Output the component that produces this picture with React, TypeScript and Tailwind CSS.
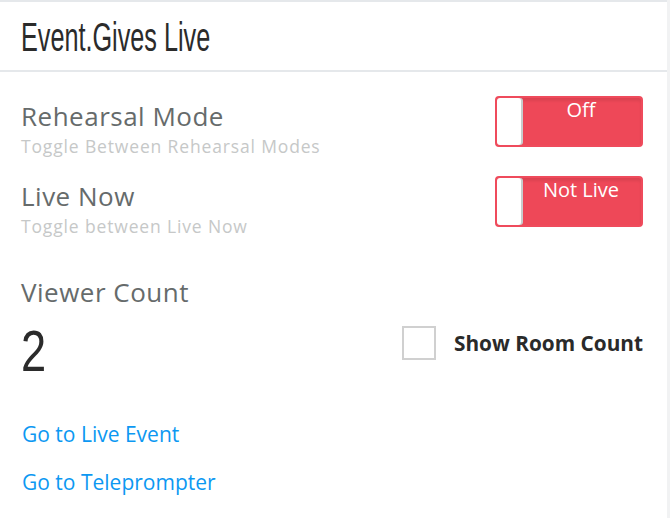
import { useState } from "react";

function Toggle({ label }: { label: string }) {
  return (
    <button className="relative flex h-[51px] w-[148px] shrink-0 rounded-[4px] border-2 border-[#ef4b5c] bg-[#ee4858] shadow-[inset_0_3px_3px_rgba(0,0,0,0.08)]">
      <span className="h-full w-[24px] rounded-[3px] bg-white shadow-[2px_0_0_#c8cccc]" />
      <span className="flex-1 text-center text-[20px] leading-[24px] text-white">
        {label}
      </span>
    </button>
  );
}

function SettingRow({ title, hint, toggle }: { title: string; hint: string; toggle: string }) {
  return (
    <div className="flex items-start justify-between">
      <div className="pt-[5px]">
        <div className="text-[26px] leading-[30px] tracking-[0.5px] text-[#666b6b]">{title}</div>
        <div className="mt-[5px] text-[17.5px] leading-[20px] tracking-[0.85px] text-[#c6c8c8]">{hint}</div>
      </div>
      <Toggle label={toggle} />
    </div>
  );
}

export default function App() {
  const [showRoom, setShowRoom] = useState(false);

  return (
    <div className="h-[518px] w-[670px] bg-[#f1f2f3] font-['Open_Sans',sans-serif]">
      <div className="h-[518px] w-[667px] border-t-2 border-[#e5e8eb] bg-white">
        <header className="flex h-[70px] items-center border-b-2 border-[#e5e8eb] px-[21px] pt-[2px]">
          <h1 className="origin-left scale-x-[0.615] whitespace-nowrap font-['Liberation_Sans_Narrow',sans-serif] text-[41px] leading-none text-[#2b2b2b]">
            Event.Gives Live
          </h1>
        </header>

        <div className="pl-[21px] pr-[24px] pt-[24px]">
          <SettingRow title="Rehearsal Mode" hint="Toggle Between Rehearsal Modes" toggle="Off" />
          <div className="h-[20px]" />
          <SettingRow title="Live Now" hint="Toggle between Live Now" toggle="Not Live" />

          <div className="mt-[41px] text-[26px] leading-[30px] tracking-[0.5px] text-[#666b6b]">
            Viewer Count
          </div>
          <div className="mt-[9px] flex items-start justify-between">
            <div className="origin-left scale-x-[0.78] font-['Liberation_Sans_Narrow',sans-serif] text-[58px] leading-[70px] text-[#2b2b2b]">
              2
            </div>
            <label className="mt-[10px] flex cursor-pointer items-center gap-[18px]">
              <input
                type="checkbox"
                checked={showRoom}
                onChange={() => setShowRoom(!showRoom)}
                className="h-[34px] w-[34px] appearance-none border-2 border-[#d0d0d0] bg-white checked:bg-[#ee4858]"
              />
              <span className="text-[20.8px] font-bold leading-[29px] text-[#2a2a2a]">Show Room Count</span>
            </label>
          </div>

          <div className="mt-[36px] flex flex-col items-start gap-[24px] pl-[1px]">
            <a href="#" className="text-[21px] leading-[24px] text-[#0c98f2]">Go to Live Event</a>
            <a href="#" className="text-[21px] leading-[24px] text-[#0c98f2]">Go to Teleprompter</a>
          </div>
        </div>
      </div>
    </div>
  );
}
